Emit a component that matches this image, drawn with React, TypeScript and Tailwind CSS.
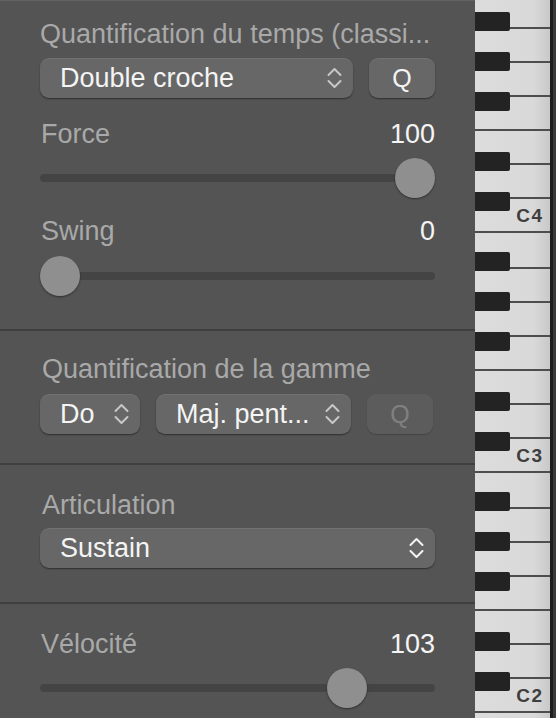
import React from "react";

const FONT = { fontFamily: '"Liberation Sans", Arial, sans-serif' };

function Chevrons({ color = "#c8c8c8" }: { color?: string }) {
  return (
    <svg width="15" height="24" viewBox="0 0 15 24" fill="none">
      <path d="M1.5 9 L7.5 3 L13.5 9" stroke={color} strokeWidth="2" strokeLinecap="round" strokeLinejoin="round" />
      <path d="M1.5 15 L7.5 21 L13.5 15" stroke={color} strokeWidth="2" strokeLinecap="round" strokeLinejoin="round" />
    </svg>
  );
}

function Select({ label, className, chevron }: { label: string; className: string; chevron?: string }) {
  return (
    <div
      className={`h-10 rounded-[9px] bg-[#676767] shadow-[0_1px_1.5px_rgba(0,0,0,0.45),inset_0_1px_0_rgba(255,255,255,0.08)] flex items-center justify-between pl-5 pr-[11px] text-[27px] text-[#f4f4f4] ${className}`}
    >
      <span className="leading-[30px] whitespace-nowrap">{label}</span>
      <Chevrons color={chevron} />
    </div>
  );
}

function QButton({ disabled }: { disabled?: boolean }) {
  return (
    <div
      className={
        disabled
          ? "w-[66px] h-10 rounded-[9px] bg-[#5c5c5c] shadow-[0_1px_1px_rgba(0,0,0,0.2)] flex items-center justify-center text-[25px] text-[#808080]"
          : "w-[66px] h-10 rounded-[9px] bg-[#676767] shadow-[0_1px_1.5px_rgba(0,0,0,0.45),inset_0_1px_0_rgba(255,255,255,0.08)] flex items-center justify-center text-[25px] text-[#f4f4f4]"
      }
    >
      <span className="leading-[30px]">Q</span>
    </div>
  );
}

function Slider({ pos }: { pos: number }) {
  return (
    <div className="relative h-10 flex items-center">
      <div className="w-full h-2 rounded-full bg-[#444444]" />
      <div
        className="absolute top-0 w-10 h-10 rounded-full bg-[#8f8f8f] shadow-[0_1px_2px_rgba(0,0,0,0.45)]"
        style={{ left: pos }}
      />
    </div>
  );
}

function LabelRow({ label, value }: { label: string; value?: string }) {
  return (
    <div className="h-[30px] flex items-center justify-between text-[27px] leading-[30px]">
      <span className="text-[#a9a9a9] pl-[1px]">{label}</span>
      {value !== undefined && <span className="text-[#f4f4f4]">{value}</span>}
    </div>
  );
}

function Piano() {
  const blackOffsets = [20, 60, 100, 160, 200];
  const lineOffsets = [36, 70, 104, 138, 172, 206, 240];
  const fullLines = new Set([138, 240]);
  const octaves = [0, 1, 2, 3];
  const labels = ["C4", "C3", "C2", ""];
  return (
    <svg width="81" height="718" viewBox="0 0 81 718" className="block shrink-0">
      <defs>
        <linearGradient id="wk" x1="0" x2="1" y1="0" y2="0">
          <stop offset="0" stopColor="#dcdcdc" />
          <stop offset="0.78" stopColor="#d9d9d9" />
          <stop offset="1" stopColor="#c9c9c9" />
        </linearGradient>
      </defs>
      <rect x="0" y="0" width="75" height="718" fill="url(#wk)" />
      {octaves.map((o) => {
        const base = -8 + o * 240;
        return (
          <g key={o}>
            {lineOffsets.map((l) => (
              <rect
                key={l}
                x={fullLines.has(l) ? 0 : 34}
                y={base + l - 1}
                width={fullLines.has(l) ? 75 : 41}
                height="2"
                fill="#4d4d4d"
              />
            ))}
            {blackOffsets.map((b) => (
              <rect key={b} x="-3" y={base + b} width="38" height="19" rx="2" fill="#232323" />
            ))}
            {labels[o] && (
              <text
                x="68.5"
                y={base + 230}
                textAnchor="end"
                fontSize="19"
                fontWeight="bold"
                letterSpacing="1.5"
                fill="#3e3e3e"
                style={FONT}
              >
                {labels[o]}
              </text>
            )}
          </g>
        );
      })}
      <rect x="75" y="0" width="3" height="718" fill="#1e1e1e" />
      <rect x="78" y="0" width="3" height="718" fill="#3a3a3a" />
    </svg>
  );
}

export default function App() {
  return (
    <div className="w-[556px] h-[718px] flex overflow-hidden bg-[#545454]" style={FONT}>
      <div className="w-[475px] h-[718px] flex flex-col border-t border-[#626262]">
        {/* Section 1 */}
        <div className="px-10 pt-[18px] pb-[33px] border-b-2 border-[#3f3f3f]">
          <div className="h-[30px] text-[27px] leading-[30px] text-[#a9a9a9] whitespace-nowrap">
            Quantification du temps (classi...
          </div>
          <div className="mt-[9px] flex gap-4">
            <Select label="Double croche" className="flex-1" />
            <QButton />
          </div>
          <div className="mt-[21px]">
            <LabelRow label="Force" value="100" />
          </div>
          <div className="mt-[9px]">
            <Slider pos={355} />
          </div>
          <div className="mt-[18px]">
            <LabelRow label="Swing" value="0" />
          </div>
          <div className="mt-[10px]">
            <Slider pos={0} />
          </div>
        </div>
        {/* Section 2 */}
        <div className="px-10 pt-[23px] pb-[29px] border-b-2 border-[#3f3f3f]">
          <div className="h-[30px] text-[27px] leading-[30px] text-[#a9a9a9] pl-[2px] whitespace-nowrap">
            Quantification de la gamme
          </div>
          <div className="mt-[10px] flex gap-4">
            <Select label="Do" className="w-[100px]" />
            <Select label="Maj. pent..." className="w-[195px]" />
            <QButton disabled />
          </div>
        </div>
        {/* Section 3 */}
        <div className="px-10 pt-[25px] pb-[34px] border-b-2 border-[#3f3f3f]">
          <div className="h-[30px] text-[27px] leading-[30px] text-[#a9a9a9] pl-[2px]">Articulation</div>
          <div className="mt-2">
            <Select label="Sustain" className="w-full" chevron="#f4f4f4" />
          </div>
        </div>
        {/* Section 4 */}
        <div className="px-10 pt-[25px]">
          <LabelRow label="Vélocité" value="103" />
          <div className="mt-[9px]">
            <Slider pos={287} />
          </div>
        </div>
      </div>
      <Piano />
    </div>
  );
}
